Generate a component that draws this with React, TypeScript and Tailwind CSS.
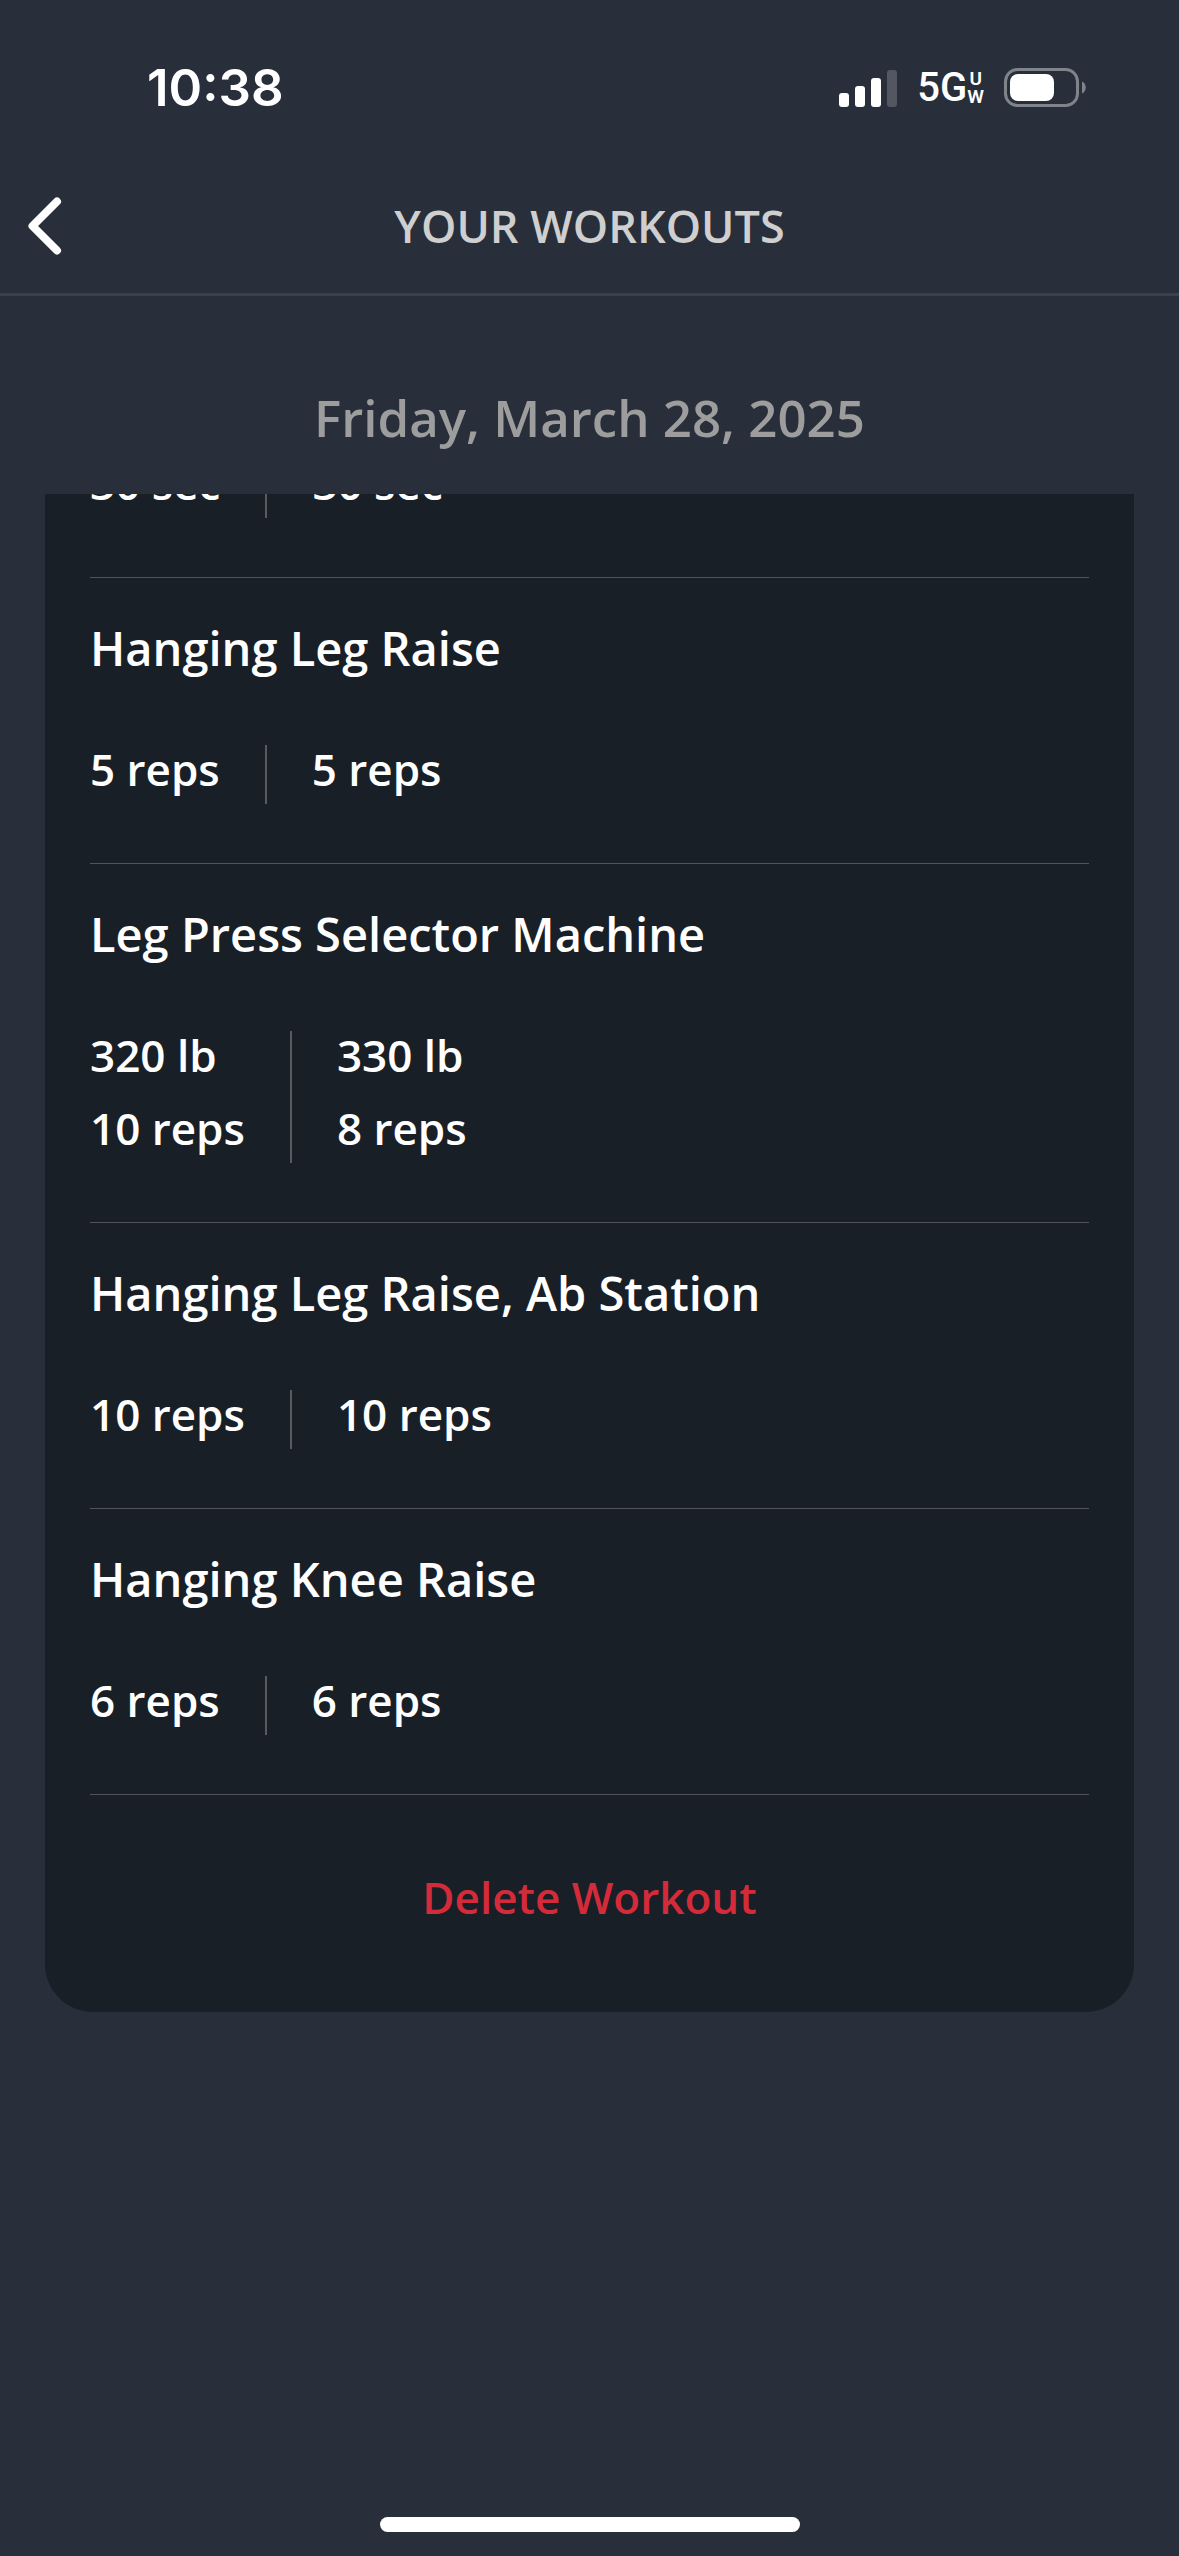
import React from "react";

type Exercise = {
  name?: string;
  sets: string[][];
};

const exercises: Exercise[] = [
  { sets: [["30 sec"], ["30 sec"]] },
  { name: "Hanging Leg Raise", sets: [["5 reps"], ["5 reps"]] },
  {
    name: "Leg Press Selector Machine",
    sets: [
      ["320 lb", "10 reps"],
      ["330 lb", "8 reps"],
    ],
  },
  { name: "Hanging Leg Raise, Ab Station", sets: [["10 reps"], ["10 reps"]] },
  { name: "Hanging Knee Raise", sets: [["6 reps"], ["6 reps"]] },
];

function StatusBar() {
  return (
    <div className="flex h-[176px] items-center justify-between pl-[147px] pr-[93px] text-white">
      <p className="font-['Inter',sans-serif] text-[51px] leading-[60px] font-semibold">
        10:38
      </p>
      <div className="flex items-center gap-[20px]">
        <svg width="58" height="38" viewBox="0 0 58 38" fill="white">
          <rect x="0" y="24" width="10" height="14" rx="3" />
          <rect x="16" y="17" width="10" height="21" rx="3" />
          <rect x="32" y="9" width="10" height="29" rx="3" />
          <rect x="48" y="1" width="10" height="37" rx="3" opacity="0.2" />
        </svg>
        <div className="flex items-center font-['Roboto',sans-serif]">
          <span className="text-[40px] leading-[48px] font-medium">5G</span>
          <span className="flex flex-col items-center text-[19px] leading-[18px] font-semibold">
            <span>U</span>
            <span>W</span>
          </span>
        </div>
        <svg width="82" height="40" viewBox="0 0 82 40" fill="none">
          <rect
            x="1.5"
            y="1.5"
            width="72"
            height="36"
            rx="12"
            stroke="#7f838a"
            strokeWidth="3"
          />
          <rect x="6" y="6" width="44" height="27" rx="8" fill="white" />
          <path d="M78 13.5C83 15.5 83 23.5 78 25.5Z" fill="#7f838a" />
        </svg>
      </div>
    </div>
  );
}

function Navbar({ title }: { title: string }) {
  return (
    <header className="grid h-[120px] grid-cols-[1fr_auto_1fr] items-center border-b-[3px] border-[#36434f] pb-[18px]">
      <button aria-label="Back" className="ml-[27px] w-[36px] cursor-pointer">
        <svg width="36" height="58" viewBox="0 0 36 58" fill="none">
          <path
            d="M30 4.5L5.5 29L30 53.5"
            stroke="white"
            strokeWidth="8"
            strokeLinecap="round"
            strokeLinejoin="round"
          />
        </svg>
      </button>
      <h1 className="text-[45px] leading-[60px] font-semibold text-[#cfcfcf]">
        {title}
      </h1>
    </header>
  );
}

function ExerciseRow({ name, sets }: Exercise) {
  return (
    <li className="border-b border-[#50545a] pb-[59px]">
      {name && (
        <h3 className="pt-[40px] pb-[67px] text-[47px] leading-[60px] font-semibold">
          {name}
        </h3>
      )}
      <div className="flex divide-x-2 divide-[#575b60]">
        {sets.map((lines, i) => (
          <div
            key={i}
            className="flex flex-col gap-[24px] px-[45px] pb-[10px] text-[44px] leading-[49px] font-semibold first:pl-0"
          >
            {lines.map((line) => (
              <p key={line}>{line}</p>
            ))}
          </div>
        ))}
      </div>
    </li>
  );
}

export default function App() {
  return (
    <div className="flex min-h-screen flex-col bg-[#282e3a] font-['Open_Sans',sans-serif]">
      <StatusBar />
      <Navbar title="YOUR WORKOUTS" />
      <main className="flex grow flex-col">
        <h2 className="pt-[86px] pb-[42px] text-center text-[51px] leading-[70px] font-semibold text-[#9d9d9d]">
          Friday, March 28, 2025
        </h2>
        <div className="overflow-hidden px-[45px]">
          {/* list is scrolled part way through the first exercise */}
          <section className="-mt-[35px] rounded-b-[48px] bg-[#191f26] px-[45px] text-white">
            <ul>
              {exercises.map((exercise, i) => (
                <ExerciseRow key={i} {...exercise} />
              ))}
            </ul>
            <div className="flex justify-center pt-[72px] pb-[85px]">
              <button className="cursor-pointer text-[44px] leading-[60px] font-semibold text-[#d42b3a]">
                Delete Workout
              </button>
            </div>
          </section>
        </div>
      </main>
      <div className="mx-auto mb-[24px] h-[15px] w-[420px] rounded-full bg-white" />
    </div>
  );
}
